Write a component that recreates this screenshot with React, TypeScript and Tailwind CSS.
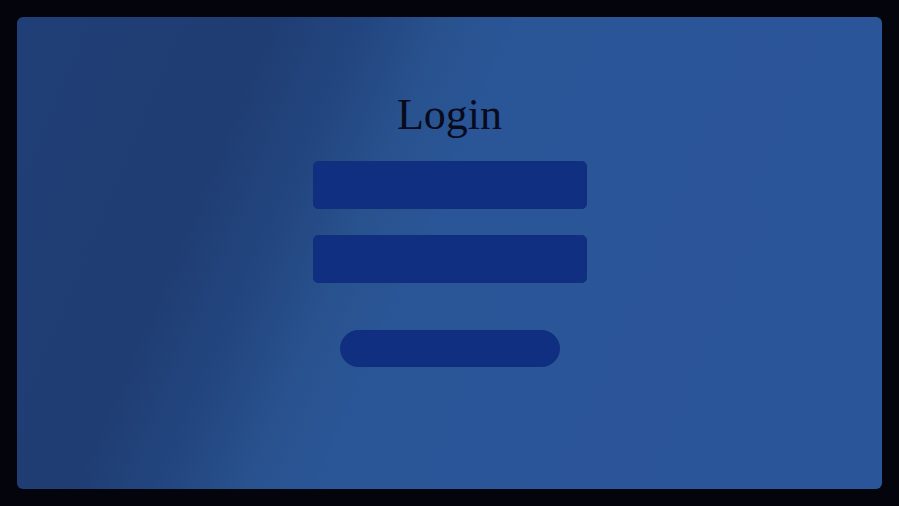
import React from "react";

export default function App() {
  return (
    <div className="w-[899px] h-[506px] bg-[#04040c] p-[17px]">
      <div className="w-full h-full rounded-[6px] flex flex-col items-center pt-[74px] bg-[linear-gradient(113deg,#203f76_0%,#1f3d73_24%,#234680_33%,#29538f_41%,#2a5597_48%,#2b5599_100%)]">
        <h1
          className="text-[44px] leading-[48px] text-[#070b1c]"
          style={{ fontFamily: '"Liberation Serif", "Times New Roman", serif' }}
        >
          Login
        </h1>
        <input
          aria-label="username"
          className="mt-[22px] w-[274px] h-[48px] rounded-[5px] bg-[#112f80] border border-[#10307c] outline-none"
        />
        <input
          aria-label="password"
          type="password"
          className="mt-[26px] w-[274px] h-[48px] rounded-[5px] bg-[#112f80] border border-[#10307c] outline-none"
        />
        <button
          className="mt-[47px] w-[220px] h-[37px] rounded-full bg-[#112f80] border border-[#10307c]"
          aria-label="login"
        />
      </div>
    </div>
  );
}
